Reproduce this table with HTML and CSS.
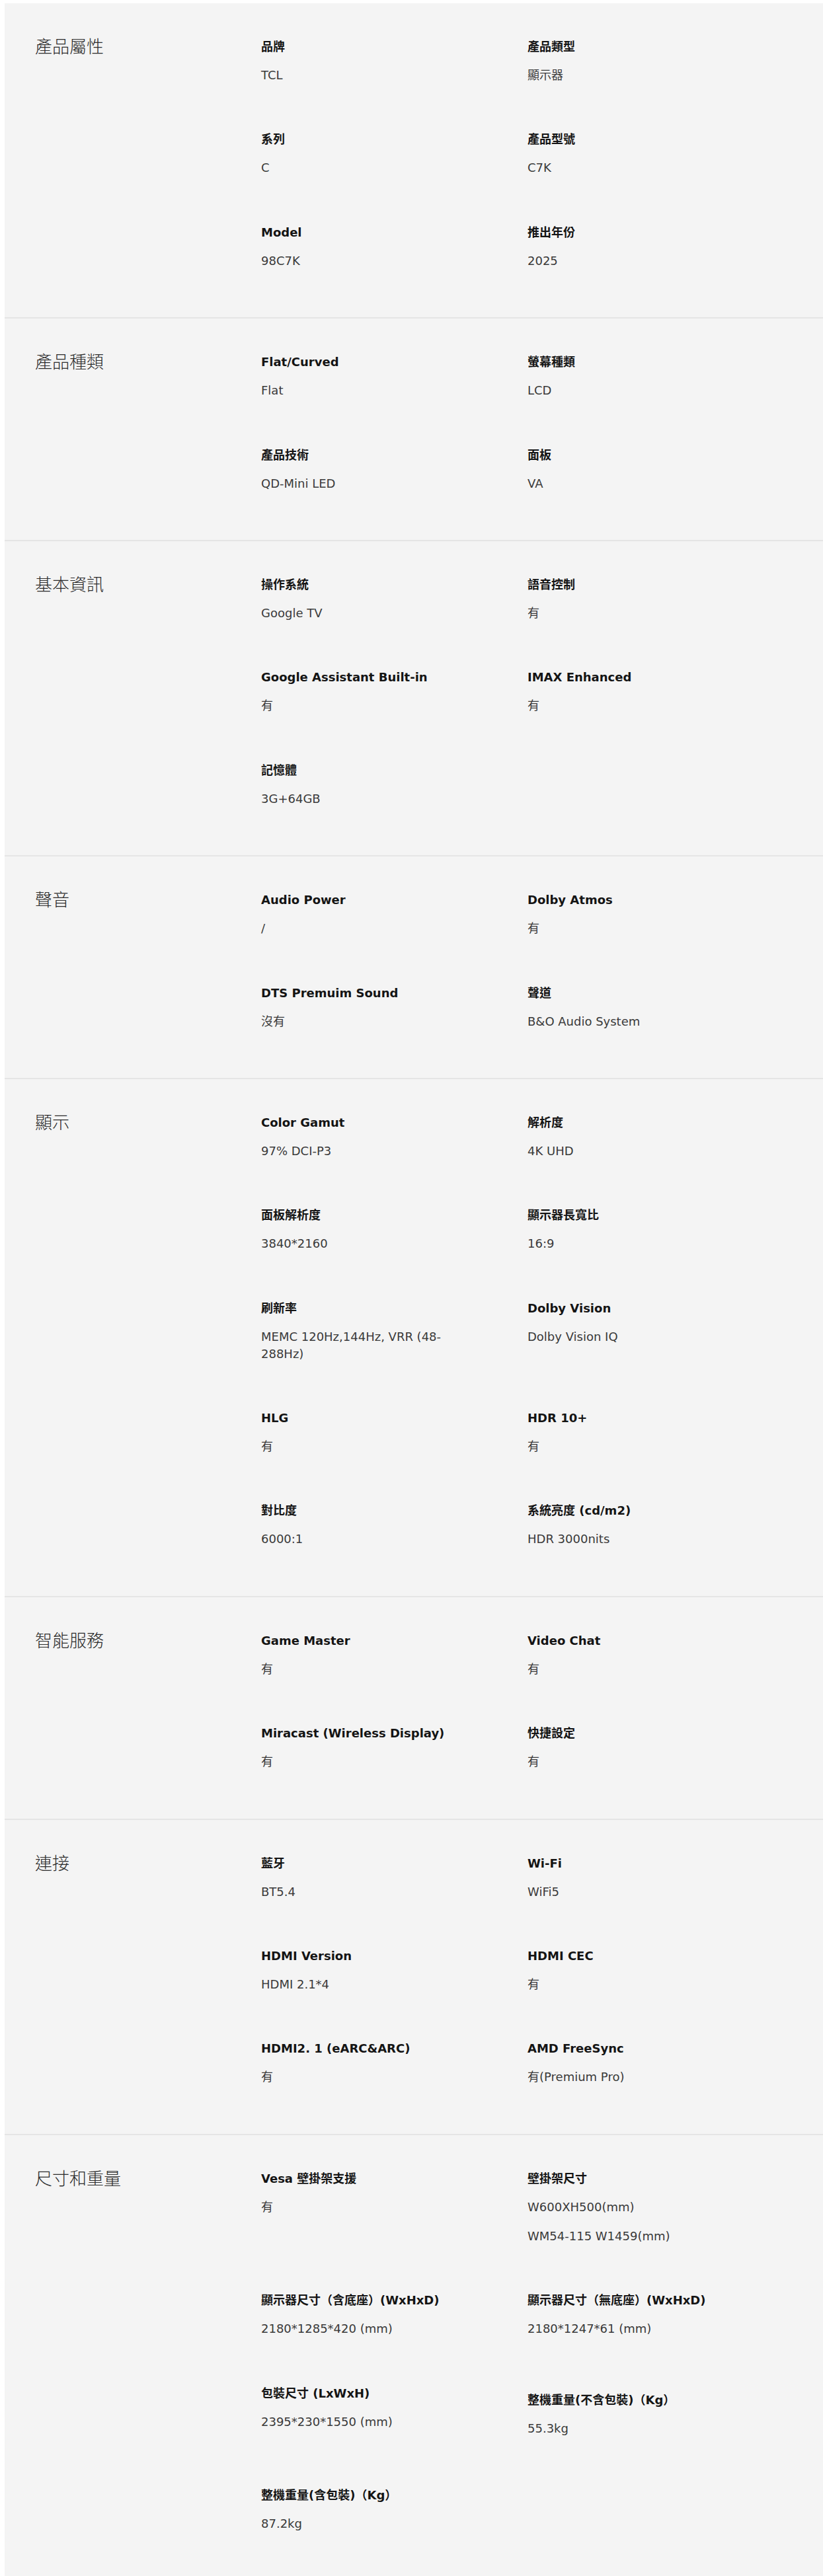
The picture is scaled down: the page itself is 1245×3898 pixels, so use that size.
FILE: index.html
```html
<!DOCTYPE html>
<html lang="zh-Hant">
<head>
<meta charset="utf-8">
<title>規格</title>
<link rel="stylesheet" href="styles.css">
</head>
<body>
<div class="specs">

  <section class="spec-group">
    <h2 class="group-title">產品屬性</h2>
    <div class="items">
      <div class="item"><p class="label">品牌</p><p class="value">TCL</p></div>
      <div class="item"><p class="label">產品類型</p><p class="value">顯示器</p></div>
      <div class="item"><p class="label">系列</p><p class="value">C</p></div>
      <div class="item"><p class="label">產品型號</p><p class="value">C7K</p></div>
      <div class="item"><p class="label">Model</p><p class="value">98C7K</p></div>
      <div class="item"><p class="label">推出年份</p><p class="value">2025</p></div>
    </div>
  </section>

  <section class="spec-group">
    <h2 class="group-title">產品種類</h2>
    <div class="items">
      <div class="item"><p class="label">Flat/Curved</p><p class="value">Flat</p></div>
      <div class="item"><p class="label">螢幕種類</p><p class="value">LCD</p></div>
      <div class="item"><p class="label">產品技術</p><p class="value">QD-Mini LED</p></div>
      <div class="item"><p class="label">面板</p><p class="value">VA</p></div>
    </div>
  </section>

  <section class="spec-group">
    <h2 class="group-title">基本資訊</h2>
    <div class="items">
      <div class="item"><p class="label">操作系統</p><p class="value">Google TV</p></div>
      <div class="item"><p class="label">語音控制</p><p class="value">有</p></div>
      <div class="item"><p class="label">Google Assistant Built-in</p><p class="value">有</p></div>
      <div class="item"><p class="label">IMAX Enhanced</p><p class="value">有</p></div>
      <div class="item"><p class="label">記憶體</p><p class="value">3G+64GB</p></div>
    </div>
  </section>

  <section class="spec-group">
    <h2 class="group-title">聲音</h2>
    <div class="items">
      <div class="item"><p class="label">Audio Power</p><p class="value">/</p></div>
      <div class="item"><p class="label">Dolby Atmos</p><p class="value">有</p></div>
      <div class="item"><p class="label">DTS Premuim Sound</p><p class="value">沒有</p></div>
      <div class="item"><p class="label">聲道</p><p class="value">B&amp;O Audio System</p></div>
    </div>
  </section>

  <section class="spec-group">
    <h2 class="group-title">顯示</h2>
    <div class="items">
      <div class="item"><p class="label">Color Gamut</p><p class="value">97% DCI-P3</p></div>
      <div class="item"><p class="label">解析度</p><p class="value">4K UHD</p></div>
      <div class="item"><p class="label">面板解析度</p><p class="value">3840*2160</p></div>
      <div class="item"><p class="label">顯示器長寬比</p><p class="value">16:9</p></div>
      <div class="item"><p class="label">刷新率</p><p class="value">MEMC 120Hz,144Hz, VRR (48-288Hz)</p></div>
      <div class="item"><p class="label">Dolby Vision</p><p class="value">Dolby Vision IQ</p></div>
      <div class="item"><p class="label">HLG</p><p class="value">有</p></div>
      <div class="item"><p class="label">HDR 10+</p><p class="value">有</p></div>
      <div class="item"><p class="label">對比度</p><p class="value">6000:1</p></div>
      <div class="item"><p class="label">系統亮度 (cd/m2)</p><p class="value">HDR 3000nits</p></div>
    </div>
  </section>

  <section class="spec-group">
    <h2 class="group-title">智能服務</h2>
    <div class="items">
      <div class="item"><p class="label">Game Master</p><p class="value">有</p></div>
      <div class="item"><p class="label">Video Chat</p><p class="value">有</p></div>
      <div class="item"><p class="label">Miracast (Wireless Display)</p><p class="value">有</p></div>
      <div class="item"><p class="label">快捷設定</p><p class="value">有</p></div>
    </div>
  </section>

  <section class="spec-group">
    <h2 class="group-title">連接</h2>
    <div class="items">
      <div class="item"><p class="label">藍牙</p><p class="value">BT5.4</p></div>
      <div class="item"><p class="label">Wi-Fi</p><p class="value">WiFi5</p></div>
      <div class="item"><p class="label">HDMI Version</p><p class="value">HDMI 2.1*4</p></div>
      <div class="item"><p class="label">HDMI CEC</p><p class="value">有</p></div>
      <div class="item"><p class="label">HDMI2. 1 (eARC&amp;ARC)</p><p class="value">有</p></div>
      <div class="item"><p class="label">AMD FreeSync</p><p class="value">有(Premium Pro)</p></div>
    </div>
  </section>

  <section class="spec-group">
    <h2 class="group-title">尺寸和重量</h2>
    <div class="items">
      <div class="item"><p class="label">Vesa 壁掛架支援</p><p class="value">有</p></div>
      <div class="item"><p class="label">壁掛架尺寸</p><p class="value">W600XH500(mm)</p><p class="value value-extra">WM54-115 W1459(mm)</p></div>
      <div class="item"><p class="label">顯示器尺寸（含底座）<strong class="strong">(WxHxD)</strong></p><p class="value">2180*1285*420 (mm)</p></div>
      <div class="item"><p class="label">顯示器尺寸（無底座）<strong class="strong">(WxHxD)</strong></p><p class="value">2180*1247*61 (mm)</p></div>
      <div class="item"><p class="label">包裝尺寸 (LxWxH)</p><p class="value">2395*230*1550 (mm)</p></div>
      <div class="item item-shift"><p class="label">整機重量(不含包裝)（Kg）</p><p class="value">55.3kg</p></div>
      <div class="item"><p class="label">整機重量(含包裝)（Kg）</p><p class="value">87.2kg</p></div>
    </div>
  </section>

</div>
</body>
</html>
```

FILE: styles.css
```css
html, body {
  margin: 0;
  padding: 0;
  background: #ffffff;
}

body {
  font-family: "DejaVu Sans", "Noto Sans CJK TC", sans-serif;
  color: #333333;
}

.specs {
  margin: 5px 0 0 7px;
  background: #f4f4f4;
}

.spec-group {
  display: grid;
  grid-template-columns: 342px 806px;
  padding: 54px 46px 0 46px;
  border-bottom: 2px solid #e5e5e5;
}

.group-title {
  margin: -8px 0 0 0;
  font-family: "Noto Sans CJK TC", sans-serif;
  font-size: 26px;
  line-height: 36px;
  font-weight: 300;
  color: #2b2b2b;
}

.items {
  display: grid;
  grid-template-columns: 403px 403px;
}

.item {
  padding: 0 100px 72.4px 0;
}

.item-shift {
  padding-top: 10px;
  padding-bottom: 76px;
}

.label {
  margin: 0 0 18px 0;
  font-family: "DejaVu Sans", "Noto Sans CJK TC", sans-serif;
  font-size: 18px;
  line-height: 24px;
  font-weight: 700;
  color: #141414;
}

.strong {
  font-weight: 800;
}

.value {
  margin: 0;
  font-family: "DejaVu Sans", "Noto Sans CJK TC", sans-serif;
  font-size: 18px;
  line-height: 26px;
  font-weight: 400;
  color: #3a3a3a;
}

.value-extra {
  margin-top: 18px;
}
```
